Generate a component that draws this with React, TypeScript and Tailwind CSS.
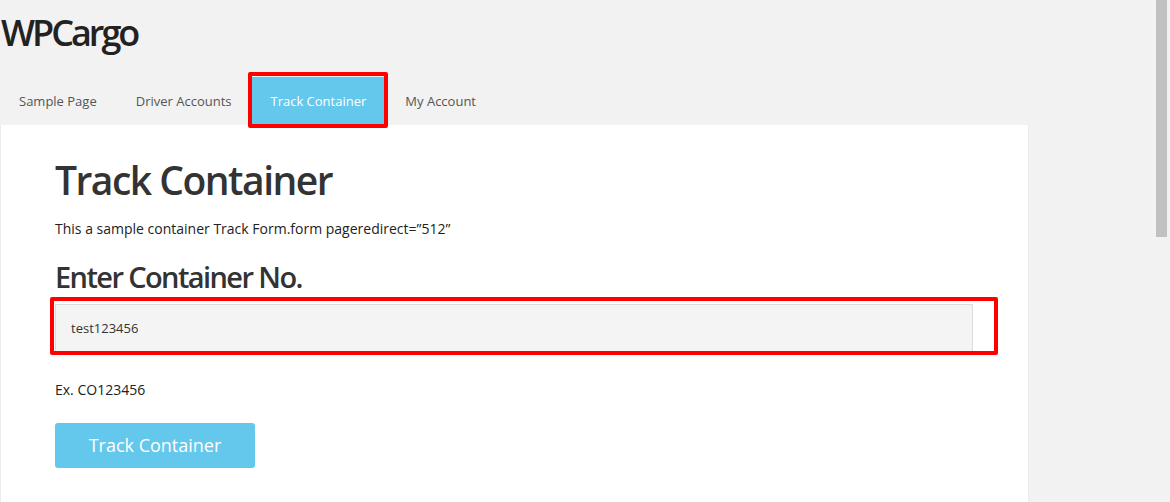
import React from "react";

const navItems = ["Sample Page", "Driver Accounts", "Track Container", "My Account"];

function NavBar() {
  return (
    <ul className="flex items-stretch gap-[3px] pl-[1px] h-[49px]">
      {navItems.map((item) => {
        const active = item === "Track Container";
        return (
          <li key={item} className="relative flex">
            <a
              href="#"
              className={`flex items-center px-[18px] pt-[2px] text-[13px] ${
                active ? "bg-[#63c8ec] text-white border-t border-[#e3f5fc]" : "text-[#555]"
              }`}
            >
              {item}
            </a>
            {active && (
              <span className="pointer-events-none absolute -inset-[4px] -bottom-[3px] border-4 border-[#ff0000] rounded-[2px]" />
            )}
          </li>
        );
      })}
    </ul>
  );
}

function TrackForm() {
  return (
    <form className="flex flex-col" onSubmit={(e) => e.preventDefault()}>
      <h3 className="text-[29px] leading-none font-semibold tracking-[-1.6px] text-[#333] mt-[23px]">
        Enter Container No.
      </h3>
      <div className="relative mt-[13px] w-[918px]">
        <input
          type="text"
          defaultValue="test123456"
          className="block w-full h-[48px] bg-[#f4f4f4] border border-[#dcdcdc] px-[15px] text-[13px] text-[#333] outline-none"
        />
        <span className="pointer-events-none absolute -left-[5px] -top-[7px] -right-[25px] -bottom-[3px] border-4 border-[#ff0000] rounded-[2px]" />
      </div>
      <p className="mt-[28px] text-[14px] leading-5 text-[#222]">Ex. CO123456</p>
      <div className="mt-[23px]">
        <button
          type="submit"
          className="w-[200px] h-[45px] rounded-[3px] bg-[#63c8ec] text-white text-[18px]"
        >
          Track Container
        </button>
      </div>
    </form>
  );
}

export default function App() {
  return (
    <div
      className="flex h-[502px] overflow-hidden bg-[#f2f2f2]"
      style={{ fontFamily: '"Open Sans", "Noto Sans", sans-serif' }}
    >
      <div className="flex-1 flex flex-col">
        <header>
          <h1 className="pl-[1px] pt-[15px] text-[36px] leading-none font-semibold tracking-[-3px] text-[#222]">
            WPCargo
          </h1>
          <nav className="mt-[25px]">
            <NavBar />
          </nav>
        </header>

        <main className="flex-1 w-[1029px] bg-white border-x border-[#ececec] pl-[54px]">
          <h1 className="mt-[35px] text-[39px] leading-none font-semibold tracking-[-1.5px] text-[#333]">
            Track Container
          </h1>
          <p className="mt-[20px] text-[14px] leading-5 text-[#222]">
            This a sample container Track Form.form pageredirect=”512”
          </p>
          <TrackForm />
        </main>
      </div>

      {/* scrollbar */}
      <div className="w-[14px] flex flex-col">
        <div className="w-[11px] h-[237px] bg-[#c1c1c1]" />
      </div>
    </div>
  );
}
